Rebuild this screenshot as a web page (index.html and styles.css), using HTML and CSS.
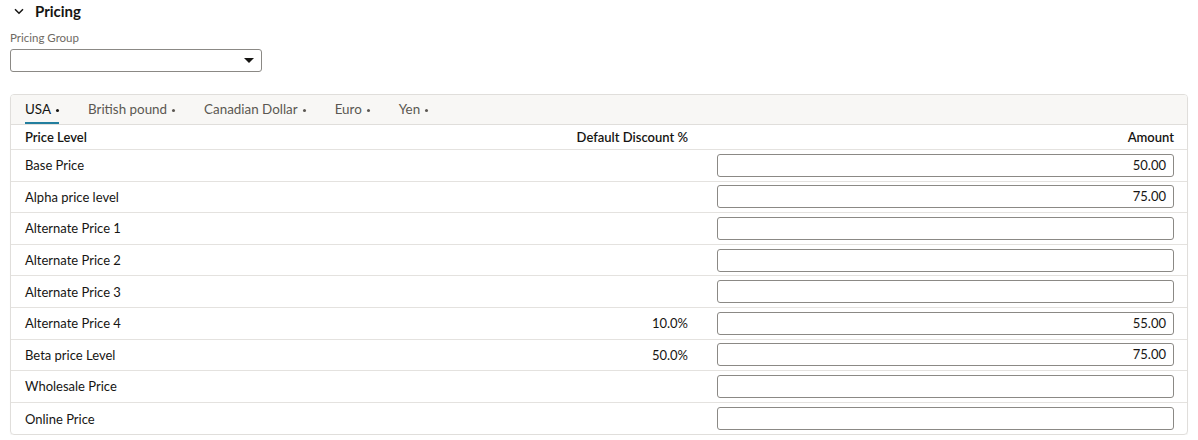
FILE: index.html
```html
<!DOCTYPE html>
<html>
<head>
<meta charset="utf-8">
<link rel="stylesheet" href="styles.css">
</head>
<body>
<div class="page">
  <div class="section-head">
    <svg class="chev" width="10" height="7" viewBox="0 0 10 7"><path d="M1 1.2 L5 5.2 L9 1.2" fill="none" stroke="#161513" stroke-width="1.5"/></svg>
    <span class="section-title">Pricing</span>
  </div>
  <div class="field">
    <label class="field-label">Pricing Group</label>
    <div class="select"><span class="caret"></span></div>
  </div>
  <div class="panel">
    <div class="tabs">
      <div class="tab active">USA<span class="dot"></span></div>
      <div class="tab">British pound<span class="dot"></span></div>
      <div class="tab">Canadian Dollar<span class="dot"></span></div>
      <div class="tab">Euro<span class="dot"></span></div>
      <div class="tab">Yen<span class="dot"></span></div>
    </div>
    <div class="row head">
      <div class="c-label">Price Level</div>
      <div class="c-disc">Default Discount %</div>
      <div class="c-amt">Amount</div>
    </div>
    <div class="row"><div class="c-label">Base Price</div><div class="c-disc"></div><div class="c-amt"><div class="input">50.00</div></div></div>
    <div class="row"><div class="c-label">Alpha price level</div><div class="c-disc"></div><div class="c-amt"><div class="input">75.00</div></div></div>
    <div class="row"><div class="c-label">Alternate Price 1</div><div class="c-disc"></div><div class="c-amt"><div class="input"></div></div></div>
    <div class="row"><div class="c-label">Alternate Price 2</div><div class="c-disc"></div><div class="c-amt"><div class="input"></div></div></div>
    <div class="row"><div class="c-label">Alternate Price 3</div><div class="c-disc"></div><div class="c-amt"><div class="input"></div></div></div>
    <div class="row"><div class="c-label">Alternate Price 4</div><div class="c-disc">10.0%</div><div class="c-amt"><div class="input">55.00</div></div></div>
    <div class="row"><div class="c-label">Beta price Level</div><div class="c-disc">50.0%</div><div class="c-amt"><div class="input">75.00</div></div></div>
    <div class="row"><div class="c-label">Wholesale Price</div><div class="c-disc"></div><div class="c-amt"><div class="input"></div></div></div>
    <div class="row last"><div class="c-label">Online Price</div><div class="c-disc"></div><div class="c-amt"><div class="input"></div></div></div>
  </div>
</div>
</body>
</html>
```
FILE: styles.css
```css
* { box-sizing: border-box; }
body {
  margin: 0;
  font-family: Lato, "Noto Sans", "Liberation Sans", sans-serif;
  color: #161513;
  background: #fff;
}
.page {
  padding: 1px 10px 0 10px;
}
.section-head {
  display: flex;
  align-items: center;
  height: 20px;
  padding-left: 4px;
}
.chev { margin-right: 11px; margin-top: 1px; }
.section-title {
  font-size: 15px;
  font-weight: 700;
}
.field { margin-top: 10px; }
.field-label {
  display: block;
  font-size: 11.5px;
  color: #6f6a63;
  height: 14px;
  line-height: 14px;
}
.select {
  margin-top: 4px;
  width: 252px;
  height: 23px;
  border: 1px solid #8b8985;
  border-radius: 3px;
  display: flex;
  justify-content: flex-end;
  align-items: center;
  padding-right: 7px;
}
.caret {
  width: 0; height: 0;
  border-left: 5px solid transparent;
  border-right: 5px solid transparent;
  border-top: 5px solid #161513;
}
.panel {
  margin-top: 22px;
  width: 1178px;
  border: 1px solid #e0dedb;
  border-radius: 4px;
  overflow: hidden;
  box-shadow: 0 1px 1px rgba(0,0,0,0.06);
}
.tabs {
  background: #f8f7f5;
  height: 30px;
  border-bottom: 1px solid #e0dedb;
  display: flex;
  padding-left: 14px;
  gap: 29px;
}
.tab {
  font-size: 13.4px;
  color: #5b5752;
  height: 29px;
  display: flex;
  align-items: center;
  padding-top: 1px;
  border-bottom: 2px solid transparent;
}
.tab.active {
  color: #161513;
  border-bottom-color: #227e9e;
}
.dot {
  width: 3px; height: 3px;
  border-radius: 50%;
  background: currentColor;
  margin-left: 5px;
  margin-top: 2px;
}
.row {
  display: grid;
  grid-template-columns: 1fr 160px 486px;
  align-items: center;
  height: 31.6px;
  border-bottom: 1px solid #e4e2df;
  padding: 0 13px 0 14px;
  font-size: 13px;
}
.row.head {
  height: 25px;
  font-weight: 600;
  font-size: 13px;
}
.row.last { border-bottom: none; }
.c-disc { text-align: right; }
.c-amt { text-align: right; display: flex; justify-content: flex-end; }
.input {
  width: 457px;
  height: 23px;
  border: 1px solid #8b8985;
  border-radius: 3px;
  text-align: right;
  padding-right: 7px;
  line-height: 21px;
  font-size: 13px;
}
```
